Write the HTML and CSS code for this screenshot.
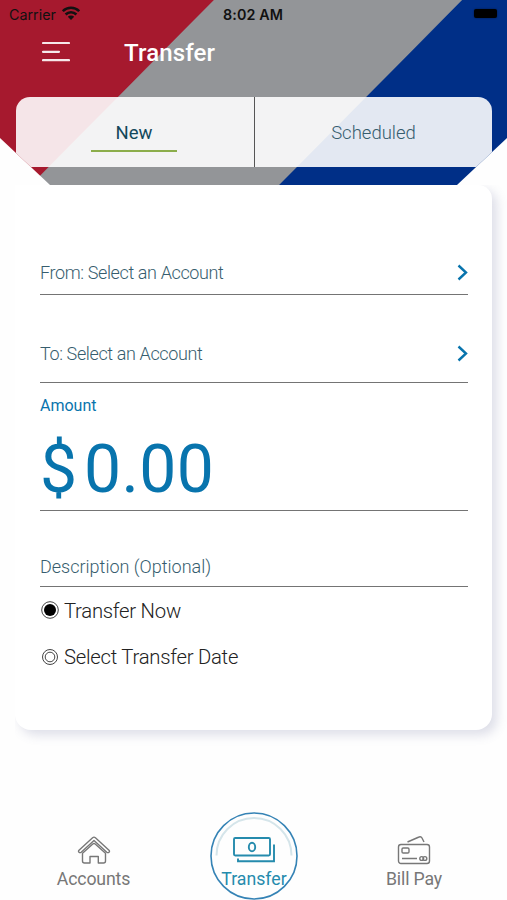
FILE: index.html
```html
<!DOCTYPE html>
<html lang="en">
<head>
<meta charset="utf-8">
<title>Transfer</title>
<link rel="stylesheet" href="styles.css">
</head>
<body>
<div class="screen">
  <header class="header">
    <div class="status">
      <div class="carrier"><span>Carrier</span>
        <svg width="18" height="14" viewBox="0 0 18 14"><g fill="none" stroke="#111" stroke-width="2.6"><path d="M.8 5.2a11.6 11.6 0 0 1 16.4 0"/><path d="M3.6 8.5a7.6 7.6 0 0 1 10.8 0"/></g><path fill="#111" d="M5.8 10.8a4.5 4.5 0 0 1 6.4 0L9 14z"/></svg>
      </div>
      <div class="clock">8:02 AM</div>
      <div class="battery"></div>
    </div>
    <div class="titlebar">
      <svg class="menu" width="28" height="22" viewBox="0 0 28 22"><path d="M1 2H27M1 10.8H17M1 19.2H27" stroke="#fff" stroke-opacity=".9" stroke-width="2.2" stroke-linecap="round"/></svg>
      <h1 class="title">Transfer</h1>
    </div>
    <nav class="tabs">
      <div class="tab tab-active"><span>New</span></div>
      <div class="tab"><span>Scheduled</span></div>
    </nav>
  </header>
  <main class="card">
    <div class="row from"><span>From: Select an Account</span><svg width="11" height="17" viewBox="0 0 11 17"><path d="M1.5 1.5L9 8.5L1.5 15.5" fill="none" stroke="#0874ad" stroke-width="2.4"/></svg></div>
    <div class="row to"><span>To: Select an Account</span><svg width="11" height="17" viewBox="0 0 11 17"><path d="M1.5 1.5L9 8.5L1.5 15.5" fill="none" stroke="#0874ad" stroke-width="2.4"/></svg></div>
    <div class="amount">
      <div class="amount-label">Amount</div>
      <div class="amount-value"><span class="currency">$</span><span>0.00</span></div>
    </div>
    <div class="row description"><span>Description (Optional)</span></div>
    <div class="option"><svg width="20" height="20" viewBox="0 0 20 20"><circle cx="10" cy="10" r="8.3" fill="none" stroke="#444"/><circle cx="10" cy="10" r="6" fill="#000"/></svg><span>Transfer Now</span></div>
    <div class="option"><svg width="20" height="20" viewBox="0 0 20 20" fill="none" stroke="#444"><circle cx="10" cy="10" r="7.5"/><circle cx="10" cy="10" r="4.8"/></svg><span>Select Transfer Date</span></div>
  </main>
  <nav class="bottom">
    <div class="item accounts">
      <svg width="34" height="30" viewBox="0 0 34 30" fill="none" stroke="#777" stroke-width="1.4" stroke-linejoin="round"><path d="M2 15.2L15.6 2.7Q17 1.6 18.4 2.7L32 15.2Q33 16.3 32 17.2Q31 18.1 29.8 17.2L17 5.6L4.2 17.2Q3 18.1 2 17.2Q1 16.3 2 15.2Z"/><path d="M5.5 18.3L15.8 9Q17 8 18.2 9L28.5 18.3V26Q28.5 28 26.5 28H21.3V21.5H13V28H7.5Q5.5 28 5.5 26Z"/></svg>
      <span>Accounts</span>
    </div>
    <div class="item transfer">
      <svg class="ring" width="88" height="88" viewBox="0 0 88 88" fill="none"><circle cx="44" cy="44" r="43" stroke="#3583b5" stroke-width="1.6"/><path d="M6.5 43.5a37.5 37.5 0 0 1 75 0" stroke="#d5e5ea" stroke-width="2"/></svg>
      <svg width="44" height="28" viewBox="0 0 44 28" fill="none" stroke="#258bad" stroke-width="1.9"><rect x="2" y="2" width="36" height="17.5" rx="1.2"/><ellipse cx="20" cy="11" rx="3.2" ry="4.3"/><path d="M42 8.5V25.3H6V22.5"/></svg>
      <span>Transfer</span>
    </div>
    <div class="item billpay">
      <svg width="34" height="30" viewBox="0 0 34 30" fill="none" stroke="#777" stroke-width="1.4"><rect x="1.5" y="9.5" width="31" height="19" rx="2.5"/><path d="M10.5 7L22 2Q24 1 25 3L27 7M5 23.5H20"/><rect x="5" y="13" width="7" height="5" rx="1.2"/><circle cx="24.7" cy="23.5" r="1.9"/><circle cx="27.9" cy="23.5" r="1.9"/></svg>
      <span>Bill Pay</span>
    </div>
  </nav>
</div>
</body>
</html>
```
FILE: styles.css
```css
* { box-sizing: border-box; }
body { margin: 0; background: #fefefe; font-family: Roboto, "Liberation Sans", sans-serif; }
svg { display: block; flex: none; }
span { white-space: nowrap; }
.screen { height: 900px; display: flex; flex-direction: column; overflow: hidden; }
.header {
  height: 185px; flex: none;
  background: linear-gradient(134.7deg, #a6192e 0 151.5px, #939598 152.5px 328px, #002f87 329px);
  clip-path: polygon(0 0, 100% 0, 100% 138px, 457px 185px, 50px 185px, 0 138px);
}
.status { height: 28px; display: grid; grid-template-columns: 1fr auto 1fr; align-items: center; padding: 0 10px 0 9px; font-family: Inter, sans-serif; font-size: 14.3px; color: #111; }
.carrier { display: flex; align-items: center; gap: 6px; }
.carrier svg { margin-top: -2px; }
.clock { font-weight: 600; letter-spacing: .1px; }
.battery { width: 23px; height: 9px; border-radius: 2px; background: #000; justify-self: end; box-shadow: 0 0 2px rgba(0,0,0,.5); margin-top: -1px; }
.titlebar { height: 69px; display: flex; align-items: flex-start; padding: 13px 0 0 42px; }
.title { margin: -3px 0 0 54px; font-size: 24px; line-height: 30px; font-weight: 500; letter-spacing: .15px; color: #fff; }
.tabs { display: grid; grid-template-columns: 239px 1fr; height: 70px; margin: 0 15px 0 16px; border-radius: 14px 14px 0 0; background: rgba(255,255,255,.89); overflow: hidden; }
.tab { display: flex; justify-content: center; align-items: flex-start; padding-top: 22px; font-size: 18.5px; line-height: 28px; font-weight: 300; color: #365d6e; }
.tab-active { padding-right: 2px; border-right: 1px solid #555; font-weight: 400; color: #12485b; }
.tab-active span { width: 86px; height: 33px; text-align: center; border-bottom: 2px solid #8bad4b; }
.card { height: 545px; flex: none; margin: 0 15px; padding: 56px 24px 0 25px; border-radius: 0 14px 16px 16px; background: #fff; box-shadow: 5px 5px 11px rgba(90,95,145,.2); clip-path: inset(0 -15px -30px 0); }
.row { display: flex; justify-content: space-between; border-bottom: 1px solid #747474; font-size: 18px; font-weight: 300; line-height: 24px; color: #365d6e; }
.from { height: 54px; padding-top: 20px; letter-spacing: -.38px; }
.to { height: 88px; padding-top: 47px; letter-spacing: -.38px; }
.from svg, .to svg { margin-top: 3px; }
.amount { height: 128px; border-bottom: 1px solid #747474; color: #0874ad; }
.amount-label { padding-top: 11px; font-size: 16px; line-height: 24px; }
.amount-value { display: flex; gap: 10px; font-size: 66px; line-height: 84px; margin-top: 10px; letter-spacing: .4px; }
.currency { width: 34px; }
.description { height: 76px; padding-top: 44px; }
.option { height: 46.5px; display: flex; align-items: center; gap: 4px; font-size: 20.3px; font-weight: 300; color: #222; letter-spacing: -.25px; }
.option span { padding-top: 1px; }
.bottom { display: grid; grid-template-columns: 187px 134px 186px; flex: 1; }
.item { display: flex; flex-direction: column; align-items: center; justify-content: flex-start; padding-top: 105px; color: #777; font-size: 17.7px; line-height: 24px; }
.accounts span, .billpay span { margin-top: 2px; letter-spacing: -.15px; }
.transfer { position: relative; color: #258bad; padding-top: 106px; }
.transfer span { margin-top: 3px; }
.ring { position: absolute; left: 23px; top: 82px; }
```
